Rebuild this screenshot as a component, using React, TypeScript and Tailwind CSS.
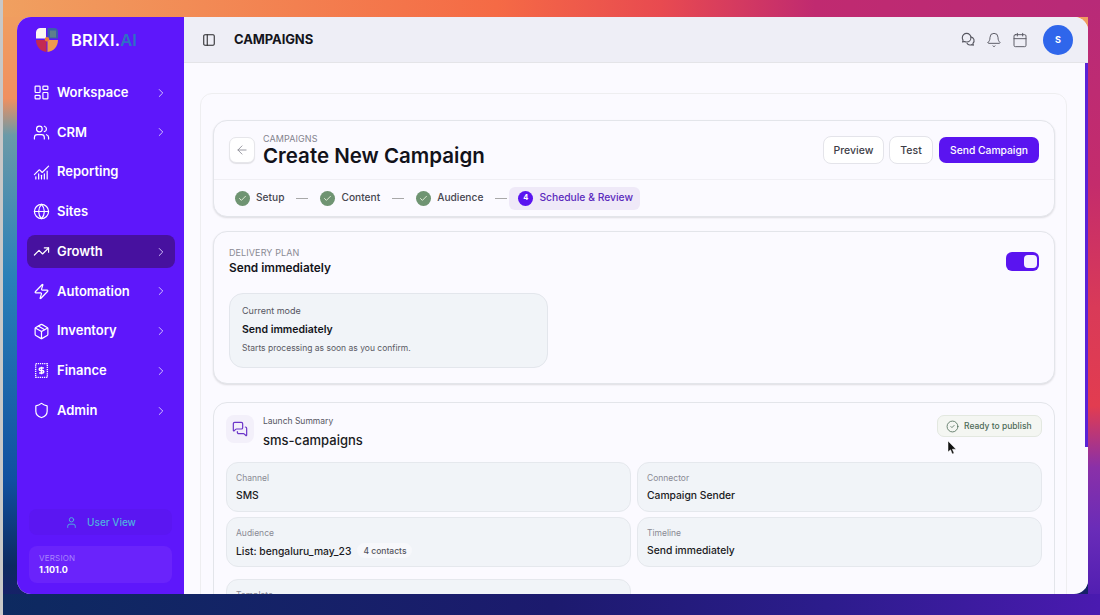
import {
  ArrowLeft,
  Bell,
  Calendar,
  ChartNoAxesCombined,
  Check,
  ChevronRight,
  CircleCheck,
  Globe,
  LayoutDashboard,
  MessagesSquare,
  Package,
  PanelLeft,
  Shield,
  TrendingUp,
  User,
  Users,
  Zap,
} from 'lucide-react';

function FinanceIcon({ className }: { className?: string }) {
  return (
    <svg viewBox="0 0 16 16" fill="none" stroke="currentColor" strokeWidth="1.3" className={className}>
      <rect x="2.5" y="1.5" width="11" height="13" strokeDasharray="1.2 0.8" />
      <path d="M10.2 5.6H7a1.2 1.2 0 0 0 0 2.4h2a1.2 1.2 0 0 1 0 2.4H5.8M8 4.4v7.2" />
    </svg>
  );
}

function ChatIcon({ className }: { className?: string }) {
  return (
    <svg viewBox="0 0 16 16" fill="none" stroke="currentColor" strokeWidth="1.2" strokeLinejoin="round" className={className}>
      <path d="M6 1.500a4.600 4.600 0 0 0-4.600 4.600c0 1 .3 1.900.8 2.600l-.5 2 2.100-.5a4.600 4.600 0 0 0 2.200.5A4.600 4.600 0 1 0 6 1.500z" />
      <path d="M10.400 5.200a4 4 0 0 1 2.300 6.900l.5 2-2-.6a4 4 0 0 1-5-1.700" />
    </svg>
  );
}

function Logo() {
  return (
    <svg viewBox="0 0 24 26" className="w-[24px] h-[26px]">
      <path d="M1 5.500A4.500 4.500 0 0 1 5.500 1H11v10.500H1z" fill="#fdf7f2" />
      <path d="M12.500 1H19a4 4 0 0 1 4 4v6.500H12.500z" fill="#3a5fa8" />
      <path d="M15 3.500h6v7h-6z" fill="#5d7f8c" />
      <path d="M1 13h10.500v12C5.500 24.500 1 19.500 1 13z" fill="#c32a52" />
      <path d="M12.500 13H23c0 6.500-4.500 11.500-10.500 12z" fill="#ee9a4d" />
      <circle cx="12" cy="12.200" r="2.200" fill="#ee7a3a" />
    </svg>
  );
}

const navItems = [
  { label: 'Workspace', icon: LayoutDashboard, arrow: true },
  { label: 'CRM', icon: Users, arrow: true },
  { label: 'Reporting', icon: ChartNoAxesCombined, arrow: false },
  { label: 'Sites', icon: Globe, arrow: false },
  { label: 'Growth', icon: TrendingUp, arrow: true, active: true },
  { label: 'Automation', icon: Zap, arrow: true },
  { label: 'Inventory', icon: Package, arrow: true },
  { label: 'Finance', icon: FinanceIcon, arrow: true },
  { label: 'Admin', icon: Shield, arrow: true },
];

function Sidebar() {
  return (
    <aside className="w-[167px] shrink-0 bg-[#5e17fb] flex flex-col text-white">
      <div className="h-[45px] flex items-center pl-[18px] pt-[1px] gap-[12px]">
        <Logo />
        <span className="text-[16.500px] font-semibold tracking-[0.2px]">
          BRIXI.<span className="text-[#2f6fc4]">AI</span>
        </span>
      </div>
      <nav className="mt-[14px] flex flex-col gap-[6.750px] pl-[10px] pr-[9px]">
        {navItems.map((item) => (
          <div
            key={item.label}
            className={`h-[33px] flex items-center pl-[6px] pr-[7px] rounded-[8px] ${item.active ? 'bg-[#47119f]' : ''}`}
          >
            <item.icon className="w-[17px] h-[17px]" strokeWidth={1.7} />
            <span className="ml-[7px] text-[13px] font-semibold flex-1">{item.label}</span>
            {item.arrow && <ChevronRight className="w-[14px] h-[14px] text-[#d9c9ff]" strokeWidth={1.6} />}
          </div>
        ))}
      </nav>
      <div className="mt-auto px-[12px] pb-[11px]">
        <div className="h-[26px] flex items-center justify-center gap-[9px] rounded-[8px] bg-[#5b16f2] text-[#4fb0e0] text-[10px] font-medium">
          <User className="w-[13px] h-[13px]" strokeWidth={1.8} />
          <span>User View</span>
        </div>
        <div className="mt-[11px] h-[37px] rounded-[8px] bg-[#6a23fb] pl-[10px] flex flex-col justify-center">
          <span className="text-[8px] leading-[11px] text-[#a884fb] tracking-[0.2px]">VERSION</span>
          <span className="text-[9px] leading-[12px] font-bold">1.101.0</span>
        </div>
      </div>
    </aside>
  );
}

function TopBar() {
  return (
    <header className="h-[46px] shrink-0 bg-[#eeeef6] border-b border-[#e4e4e8] flex items-center pl-[18px] pr-[15px]">
      <PanelLeft className="w-[14px] h-[14px] text-[#27272a]" strokeWidth={1.8} />
      <h1 className="ml-[18px] text-[13px] font-bold text-[#15151c] tracking-[-0.1px]">CAMPAIGNS</h1>
      <div className="ml-auto flex items-center text-[#55555f]">
        <ChatIcon className="w-[15px] h-[15px]" />
        <Bell className="ml-[10px] w-[16px] h-[16px]" strokeWidth={1.4} />
        <Calendar className="ml-[10px] w-[16px] h-[16px]" strokeWidth={1.4} />
        <div className="ml-[15px] w-[30px] h-[30px] rounded-full bg-[#2f66eb] flex items-center justify-center text-white text-[9px] font-bold">
          S
        </div>
      </div>
    </header>
  );
}

function Step({ label }: { label: string }) {
  return (
    <>
      <span className="w-[15px] h-[15px] rounded-full bg-[#6f9472] flex items-center justify-center">
        <Check className="w-[9px] h-[9px] text-[#e6f0dc]" strokeWidth={2.5} />
      </span>
      <span className="ml-[6px] text-[10.200px] font-medium text-[#46464f]">{label}</span>
      <span className="mx-[12px] w-[12px] h-[1px] bg-[#a8a8a8]" />
    </>
  );
}

function HeaderCard() {
  return (
    <section className="rounded-[14px] border border-[#e3e5ea] bg-[#fbfaff] shadow-[0_1px_2px_rgba(0,0,0,0.12)]">
      <div className="h-[59px] flex items-center pl-[15px] pr-[15px] border-b border-[#f0eff4]">
        <button className="w-[26px] h-[26px] rounded-[7px] border border-[#e6e6ea] bg-white shadow-[0_1px_1px_rgba(0,0,0,0.1)] flex items-center justify-center text-[#8d8d96]">
          <ArrowLeft className="w-[14px] h-[14px]" strokeWidth={1.5} />
        </button>
        <div className="ml-[8px] pt-[1px]">
          <div className="text-[9px] leading-[11px] text-[#83838d] tracking-[0.1px]">CAMPAIGNS</div>
          <div className="text-[20.500px] leading-[24px] font-semibold text-[#12121a]">Create New Campaign</div>
        </div>
        <div className="ml-auto flex items-center gap-[5px]">
          <button className="h-[28px] w-[61px] pt-[1px] rounded-[8px] border border-[#e4e4ea] bg-white text-[10.500px] font-medium text-[#3d3d47]">Preview</button>
          <button className="h-[28px] w-[44px] pt-[1px] rounded-[8px] border border-[#e4e4ea] bg-white text-[10.500px] font-medium text-[#3d3d47]">Test</button>
          <button className="h-[26px] w-[100px] ml-[1px] pt-[1px] rounded-[7px] bg-[#5a14f0] text-[10.300px] font-medium text-white">Send Campaign</button>
        </div>
      </div>
      <div className="h-[36px] flex items-center pl-[21px]">
        <Step label="Setup" />
        <Step label="Content" />
        <Step label="Audience" />
        <div className="-ml-[10px] h-[23px] w-[131px] rounded-[6px] bg-[#efe9f8] flex items-center pl-[9px]">
          <span className="w-[15px] h-[15px] rounded-full bg-[#5a14f0] text-white text-[7.500px] font-bold flex items-center justify-center">4</span>
          <span className="ml-[6px] text-[10.300px] font-medium text-[#5b2bbd]">Schedule &amp; Review</span>
        </div>
      </div>
    </section>
  );
}

function DeliveryCard() {
  return (
    <section className="mt-[14px] h-[153px] rounded-[14px] border border-[#e3e5ea] bg-[#fbfaff] shadow-[0_1px_2px_rgba(0,0,0,0.12)] pt-[15px] pl-[15px] pr-[15px]">
      <div className="flex justify-between">
        <div>
          <div className="text-[9px] leading-[12px] text-[#8a8a94] tracking-[0.1px]">DELIVERY PLAN</div>
          <div className="mt-[2px] text-[11.800px] leading-[15px] font-semibold text-[#14141b]">Send immediately</div>
        </div>
        <div className="mt-[5px] w-[33px] h-[19px] rounded-[6px] bg-[#5a14f0] flex items-center justify-end pr-[2px]">
          <span className="w-[13px] h-[13px] rounded-[4px] bg-[#f6f3ff]" />
        </div>
      </div>
      <div className="mt-[17px] w-[319px] h-[75px] rounded-[14px] border border-[#e3e6ec] bg-[#f1f4f8] pl-[12px] pt-[11px]">
        <div className="text-[9px] leading-[12px] text-[#55555f]">Current mode</div>
        <div className="mt-[6px] text-[10.500px] leading-[13px] font-semibold text-[#14141b]">Send immediately</div>
        <div className="mt-[6px] text-[8.500px] leading-[12px] text-[#5a5a64]">Starts processing as soon as you confirm.</div>
      </div>
    </section>
  );
}

function InfoBox({ label, children }: { label: string; children?: React.ReactNode }) {
  return (
    <div className="h-[50px] rounded-[12px] border border-[#e5e8ed] bg-[#f1f4f8] pl-[9px] pt-[10px]">
      <div className="text-[8.500px] leading-[11px] text-[#8a8a94]">{label}</div>
      {children && (
        <div className="mt-[4px] text-[10.300px] leading-[14px] font-medium text-[#1a1a22] flex items-center">{children}</div>
      )}
    </div>
  );
}

function SummaryCard() {
  return (
    <section className="mt-[18px] rounded-t-[14px] border border-[#e3e5ea] bg-[#fbfaff] pt-[12px] px-[12px] pb-[20px]">
      <div className="flex items-start">
        <div className="w-[28px] h-[28px] rounded-[8px] bg-[#f3f0fa] flex items-center justify-center text-[#6b35c9]">
          <MessagesSquare className="w-[16px] h-[16px]" strokeWidth={1.8} />
        </div>
        <div className="ml-[9px]">
          <div className="text-[8.500px] leading-[12px] text-[#55555f]">Launch Summary</div>
          <div className="mt-[4px] text-[13px] leading-[18px] font-medium text-[#1a1a22]">sms-campaigns</div>
        </div>
        <div className="ml-auto w-[105px] h-[22px] rounded-[7px] border border-[#e3e8e0] bg-[#f4f6f2] flex items-center pl-[8px] text-[#4e6b58]">
          <CircleCheck className="w-[13px] h-[13px]" strokeWidth={1.5} />
          <span className="ml-[5px] text-[8.500px] font-medium">Ready to publish</span>
        </div>
      </div>
      <div className="mt-[13px] grid grid-cols-2 gap-x-[6px] gap-y-[5px]">
        <InfoBox label="Channel">SMS</InfoBox>
        <InfoBox label="Connector">Campaign Sender</InfoBox>
        <InfoBox label="Audience">
          List: bengaluru_may_23
          <span className="ml-[6px] h-[15px] px-[6px] rounded-full bg-[#f7f8fb] text-[8.500px] text-[#55555f] flex items-center">4 contacts</span>
        </InfoBox>
        <InfoBox label="Timeline">Send immediately</InfoBox>
      </div>
      <div className="mt-[12px] grid grid-cols-2 gap-[6px]">
        <InfoBox label="Template" />
      </div>
    </section>
  );
}

export default function App() {
  return (
    <div className="relative w-[1100px] h-[615px] overflow-hidden border-l-[3px] border-[#c8c8c8] pl-[14px] pt-[17px] pr-[12px] pb-[21px] font-['Inter',sans-serif] bg-[linear-gradient(to_bottom,#f0a060_0,#f09060_16%,#6a9aa8_22%,#2a80b8_45%,#1050a0_78%,#0d2a60_92%,#1c1a6e_100%)]">
      <div className="absolute inset-x-0 top-0 h-[17px] bg-[linear-gradient(to_right,#f0a060,#f56a45_45%,#e84a50_60%,#c02a70_74%,#b82a78)]" />
      <div className="absolute top-0 bottom-0 right-0 w-[12px] bg-[linear-gradient(to_bottom,#b82a78_0,#c42c6c_30%,#d93a58_50%,#e23c50_66%,#8a30a8_76%,#6a2cb8_86%,#4a1ab0_100%)]" />
      <div className="absolute bottom-0 right-0 left-0 h-[21px] bg-[linear-gradient(to_right,#0d2a60,#1c1a6e_50%,#2c1c8c_75%,#4a1ab0)]" />
      <div className="relative h-[577px] flex rounded-[14px] overflow-hidden bg-[#fbfaff]">
        <Sidebar />
        <div className="flex-1 min-w-0 flex flex-col">
          <TopBar />
          <div className="flex-1 min-h-0 flex">
            <main className="flex-1 min-w-0 overflow-hidden pl-[16px] pr-[18px] pt-[30px]">
              <div className="rounded-t-[12px] border border-[#eeeef0] bg-[#fbfaff] pl-[12px] pr-[11px] pt-[26px]">
                <HeaderCard />
                <DeliveryCard />
                <SummaryCard />
              </div>
            </main>
            <div className="w-[3px] shrink-0 bg-[#fbfaff]">
              <div className="h-[384px] bg-[#5a22d6]" />
            </div>
          </div>
        </div>
      </div>
      {/* mouse pointer */}
      <svg viewBox="0 0 10 14" className="absolute left-[944px] top-[441px] w-[10px] h-[14px]">
        <path d="M1 0v11l2.500-2.200L5.300 13l1.800-.8L5.400 8.200H9z" fill="#111" stroke="#fff" strokeWidth="0.5" />
      </svg>
    </div>
  );
}
